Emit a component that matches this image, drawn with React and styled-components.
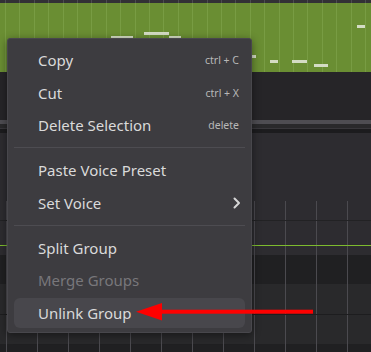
import React from "react";
import styled, { createGlobalStyle } from "styled-components";

const GlobalStyle = createGlobalStyle`
  html, body {
    margin: 0;
    padding: 0;
    background: #262528;
  }
  body {
    width: 371px;
    height: 352px;
    overflow: hidden;
    font-family: "Noto Sans", "Open Sans", sans-serif;
  }
`;

const notes = [
  { x: 111, y: 36, w: 22 },
  { x: 144, y: 32, w: 25 },
  { x: 169, y: 36, w: 12 },
  { x: 240, y: 55, w: 16 },
  { x: 270, y: 60, w: 8 },
  { x: 292, y: 60, w: 15 },
  { x: 314, y: 64, w: 14 },
  { x: 357, y: 25, w: 8 },
];

const menuItems = [
  { label: "Copy", shortcut: "ctrl + C" },
  { label: "Cut", shortcut: "ctrl + X" },
  { label: "Delete Selection", shortcut: "delete" },
  { separator: true },
  { label: "Paste Voice Preset" },
  { label: "Set Voice", submenu: true },
  { separator: true },
  { label: "Split Group" },
  { label: "Merge Groups", disabled: true },
  { label: "Unlink Group", active: true },
];

const Chevron = () => (
  <svg width="8" height="12" viewBox="0 0 8 12">
    <polyline
      points="1.5,1.5 6,6 1.5,10.5"
      fill="none"
      stroke="#d6d6d6"
      strokeWidth="2"
      strokeLinecap="round"
      strokeLinejoin="round"
    />
  </svg>
);

const App = () => {
  return (
    <Page>
      <GlobalStyle />
      <Ruler />
      <NoteLane>
        {notes.map((n, i) => (
          <Note key={`note-${i}`} style={{ left: n.x, top: n.y - 3, width: n.w }} />
        ))}
      </NoteLane>
      <EmptyLane />
      <ScrollBar />
      <Band $h={4.3} $bg="#29292b" />
      <Band $h={0.7} $bg="#38373b" />
      <Band $h={4} $bg="#1c1c1e" />
      <Band $h={68} $bg="#2d2c30" />
      <GridRows>
        <GridRow $h={20} $bg="#2d2c30" $line="#222224" />
        <GridRow $h={24} $bg="#2d2c30" />
        <PitchLine />
        <GridRow $h={8.5} $bg="#2d2c30" />
        <GridRow $h={29} $bg="#202022" />
        <GridRow $h={31} $bg="#29292b" $line="#1d1d1f" />
        <GridRow $h={29} $bg="#29292b" />
        <GridRow $h={8} $bg="#202022" />
      </GridRows>

      <Menu>
        {menuItems.map((item, index) =>
          item.separator ? (
            <Separator key={`sep-${index}`} />
          ) : (
            <MenuItem key={`item-${index}`} $active={item.active} $disabled={item.disabled}>
              <Label>{item.label}</Label>
              {item.shortcut && <Shortcut>{item.shortcut}</Shortcut>}
              {item.submenu && <Chevron />}
            </MenuItem>
          )
        )}
      </Menu>

      <Arrow width="371" height="352" viewBox="0 0 371 352">
        <rect x="158" y="309.7" width="155" height="4" fill="#fe0000" />
        <polygon points="136,311.7 162,303 162,320.5" fill="#fe0000" />
      </Arrow>
    </Page>
  );
};

export default App;

const Page = styled.div`
  position: relative;
  width: 371px;
  height: 352px;
  display: flex;
  flex-direction: column;
  overflow: hidden;
`;
const Ruler = styled.div`
  height: 3px;
  flex: none;
  background: repeating-linear-gradient(
      90deg,
      transparent 0 5px,
      #4c4b50 5px 6px,
      transparent 6px 14.4px
    ),
    #323135;
`;
const NoteLane = styled.div`
  position: relative;
  height: 69px;
  flex: none;
  background: repeating-linear-gradient(
      90deg,
      transparent 0 5px,
      #789c43 5px 6px,
      transparent 6px 14.4px
    ),
    #6a8e33;
`;
const Note = styled.div`
  position: absolute;
  height: 3px;
  background: #d4dcc4;
`;
const EmptyLane = styled.div`
  height: 48px;
  flex: none;
  background: #262528;
`;
const ScrollBar = styled.div`
  height: 4px;
  flex: none;
  background: #4e4d52;
`;
const Band = styled.div`
  height: ${(p) => p.$h}px;
  flex: none;
  background: ${(p) => p.$bg};
`;
const GridRows = styled.div`
  display: flex;
  flex-direction: column;
  flex: 1;
`;
const GridRow = styled.div`
  height: ${(p) => p.$h}px;
  flex: none;
  box-sizing: border-box;
  border-bottom: ${(p) => (p.$line ? `1px solid ${p.$line}` : "none")};
  background: repeating-linear-gradient(
      90deg,
      transparent 0 6px,
      #4b4a4f 6px 7px,
      transparent 7px 31px
    ),
    ${(p) => p.$bg};
`;
const PitchLine = styled.div`
  height: 1.5px;
  flex: none;
  background: #7dbb2e;
`;
const Menu = styled.div`
  position: absolute;
  left: 7px;
  top: 38px;
  width: 245px;
  box-sizing: border-box;
  padding: 6px 6px 4px;
  display: flex;
  flex-direction: column;
  gap: 2.5px;
  background: #3d3c40;
  border: 1px solid #48474c;
  border-radius: 3px;
  box-shadow: 0 2px 8px rgba(0, 0, 0, 0.45);
`;
const MenuItem = styled.div`
  height: 30px;
  display: flex;
  align-items: center;
  padding: 0 4px 0 24px;
  border-radius: 6px;
  background: ${(p) => (p.$active ? "#48474c" : "transparent")};
  color: ${(p) => (p.$disabled ? "#78777b" : "#dadada")};
`;
const Label = styled.span`
  flex: 1;
  font-size: 15px;
  line-height: 1;
  padding-top: 1px;
`;
const Shortcut = styled.span`
  font-size: 10.5px;
  color: #b8b8b8;
  padding-right: 2px;
`;
const Separator = styled.div`
  height: 1px;
  margin: 4.5px 0;
  background: #4d4c51;
`;
const Arrow = styled.svg`
  position: absolute;
  left: 0;
  top: 0;
  pointer-events: none;
`;
